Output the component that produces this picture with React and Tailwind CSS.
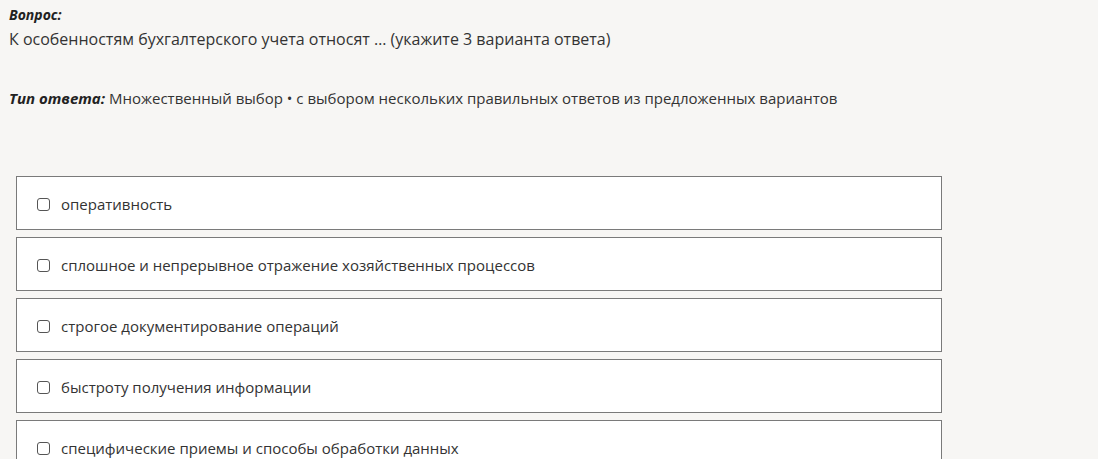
const options = [
  "оперативность",
  "сплошное и непрерывное отражение хозяйственных процессов",
  "строгое документирование операций",
  "быстроту получения информации",
  "специфические приемы и способы обработки данных",
];

const Option = ({ label }) => (
  <label className="flex items-center h-[54px] bg-white border border-[#7a7a7a] pl-[20px] pt-[2px] cursor-pointer">
    <span className="w-[13px] h-[13px] border border-[#555] rounded-[3px] bg-white shrink-0" />
    <span className="ml-[11px] text-[15px] text-[#333]">{label}</span>
  </label>
);

export default function App() {
  return (
    <div className="min-h-[459px] bg-[#f7f6f4] font-['Open_Sans',sans-serif] text-[#333] overflow-hidden">
      <div className="pl-[9px] pt-[4px]">
        <div className="text-[14px] font-bold italic text-[#222] leading-[22px]">Вопрос:</div>
        <div className="text-[16px] leading-[27px]">
          К особенностям бухгалтерского учета относят … (укажите 3 варианта ответа)
        </div>
        <div className="mt-[32px] text-[15px] leading-[26px]">
          <span className="font-bold italic text-[#222] text-[15px]">Тип ответа:</span>{" "}
          Множественный выбор • с выбором нескольких правильных ответов из предложенных вариантов
        </div>
      </div>
      <div className="mt-[65px] ml-[16px] w-[926px] flex flex-col gap-[7px]">
        {options.map((o) => (
          <Option key={o} label={o} />
        ))}
      </div>
    </div>
  );
}
